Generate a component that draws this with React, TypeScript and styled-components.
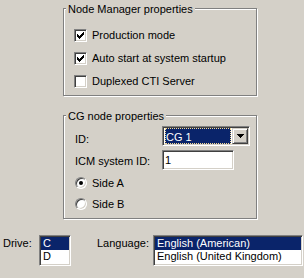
import React from "react";
import styled, { createGlobalStyle } from "styled-components";

const Global = createGlobalStyle`
  html, body { margin: 0; padding: 0; background: #d4d0c8; }
  body { font-family: "Liberation Sans", Arial, sans-serif; font-size: 11px; color: #000; }
`;

const Page = styled.div`
  width: 304px;
  height: 278px;
  box-sizing: border-box;
  padding-top: 8px;
  display: flex;
  flex-direction: column;
  background: #d4d0c8;
  overflow: hidden;
  font-family: "Liberation Sans", Arial, sans-serif;
  font-size: 11px;
  line-height: 13px;
  color: #000;
`;

const GroupColumn = styled.div`
  margin-left: 63px;
  display: flex;
  flex-direction: column;
`;

const Group = styled.div<{ $h: number; $pt: number; $pl: number; $mt?: number }>`
  position: relative;
  box-sizing: border-box;
  width: 194px;
  height: ${(p) => p.$h}px;
  margin-top: ${(p) => p.$mt ?? 0}px;
  padding: ${(p) => p.$pt}px 0 0 ${(p) => p.$pl}px;
  border: 1px solid #808080;
  box-shadow: inset 1px 1px 0 #fff, 1px 1px 0 #fff;
`;

const Legend = styled.span`
  position: absolute;
  top: -6px;
  left: 2px;
  padding: 0 2px;
  background: #d4d0c8;
  line-height: 13px;
  white-space: nowrap;
`;

const CheckList = styled.div`
  display: flex;
  flex-direction: column;
  gap: 10px;
`;

const CheckRow = styled.div`
  display: flex;
  align-items: center;
  gap: 5px;
  height: 13px;
  white-space: nowrap;
`;

const sunken = `
  border: 1px solid;
  border-color: #808080 #fff #fff #808080;
  box-shadow: inset 1px 1px 0 #404040, inset -1px -1px 0 #d4d0c8;
`;

const raised = `
  border: 1px solid;
  border-color: #d4d0c8 #404040 #404040 #d4d0c8;
  box-shadow: inset 1px 1px 0 #fff, inset -1px -1px 0 #808080;
`;

const CheckBox = styled.span`
  box-sizing: border-box;
  width: 13px;
  height: 13px;
  flex: none;
  background: #fff;
  ${sunken}
  display: flex;
  align-items: center;
  justify-content: center;
`;

const FormGrid = styled.div`
  display: grid;
  grid-template-columns: 87px auto;
  row-gap: 4px;
  align-items: start;
`;

const FieldLabel = styled.span<{ $pt: number }>`
  padding-top: ${(p) => p.$pt}px;
  white-space: nowrap;
`;

const Combo = styled.div`
  box-sizing: border-box;
  width: 88px;
  height: 20px;
  background: #fff;
  ${sunken}
  padding: 1px;
  display: flex;
`;

const ComboField = styled.div`
  flex: 1;
  padding: 0 1px;
  display: flex;
`;

const ComboSelection = styled.div`
  flex: 1;
  box-sizing: border-box;
  background: #0a246a;
  color: #fff;
  border: 1px dotted #f5db95;
  line-height: 14px;
  padding-top: 1px;
  white-space: nowrap;
`;

const DropButton = styled.div`
  box-sizing: border-box;
  width: 16px;
  height: 16px;
  background: #d4d0c8;
  ${raised}
  display: flex;
  align-items: center;
  justify-content: center;
`;

const TextField = styled.div`
  box-sizing: border-box;
  width: 72px;
  height: 20px;
  background: #fff;
  ${sunken}
  padding: 1px 2px;
  line-height: 16px;
`;

const RadioList = styled.div`
  grid-column: 1 / -1;
  margin-top: 3px;
  display: flex;
  flex-direction: column;
  gap: 9px;
`;

const RadioRow = styled.div`
  display: flex;
  align-items: center;
  gap: 5px;
  height: 12px;
  white-space: nowrap;
`;

const Radio = styled.span`
  box-sizing: border-box;
  width: 12px;
  height: 12px;
  flex: none;
  border-radius: 50%;
  background: #fff;
  ${sunken}
  display: flex;
  align-items: center;
  justify-content: center;
`;

const RadioDot = styled.span`
  width: 4px;
  height: 4px;
  border-radius: 50%;
  background: #000;
`;

const BottomRow = styled.div`
  display: flex;
  align-items: flex-start;
  margin-top: 16px;
  padding-left: 3px;
`;

const BottomLabel = styled.span<{ $w: number; $ml?: number }>`
  width: ${(p) => p.$w}px;
  margin-left: ${(p) => p.$ml ?? 0}px;
  padding-top: 2px;
  white-space: nowrap;
`;

const ListBox = styled.div<{ $w: number }>`
  box-sizing: border-box;
  width: ${(p) => p.$w}px;
  height: 31px;
  background: #fff;
  ${sunken}
  padding: 1px;
  display: flex;
  flex-direction: column;
`;

const ListItem = styled.div<{ $selected?: boolean }>`
  height: 13px;
  line-height: 13px;
  padding-left: 2px;
  white-space: nowrap;
  background: ${(p) => (p.$selected ? "#0a246a" : "transparent")};
  color: ${(p) => (p.$selected ? "#fff" : "#000")};
`;

const CheckMark = () => (
  <svg width="7" height="7" viewBox="0 0 7 7" shapeRendering="crispEdges">
    <path
      d="M0 2h1v1h1v1h1v-1h1v-1h1v-1h1v-1h1v3h-1v1h-1v1h-1v1h-1v1h-1v-1h-1v-1h-1z"
      fill="#000"
    />
  </svg>
);

const DownArrow = () => (
  <svg width="7" height="4" viewBox="0 0 7 4" shapeRendering="crispEdges">
    <path d="M0 0h7v1h-1v1h-1v1h-1v1h-1v-1h-1v-1h-1v-1h-1z" fill="#000" />
  </svg>
);

const checks = [
  { label: "Production mode", checked: true },
  { label: "Auto start at system startup", checked: true },
  { label: "Duplexed CTI Server", checked: false },
];

export default function App() {
  return (
    <>
      <Global />
      <Page>
        <GroupColumn>
          <Group $h={88} $pt={20} $pl={10}>
            <Legend>Node Manager properties</Legend>
            <CheckList>
              {checks.map((c) => (
                <CheckRow key={c.label}>
                  <CheckBox>{c.checked && <CheckMark />}</CheckBox>
                  {c.label}
                </CheckRow>
              ))}
            </CheckList>
          </Group>
          <Group $h={104} $pt={10} $pl={11} $mt={19}>
            <Legend>CG node properties</Legend>
            <FormGrid>
              <FieldLabel $pt={7}>ID:</FieldLabel>
              <Combo>
                <ComboField>
                  <ComboSelection>CG 1</ComboSelection>
                </ComboField>
                <DropButton>
                  <DownArrow />
                </DropButton>
              </Combo>
              <FieldLabel $pt={5}>ICM system ID:</FieldLabel>
              <TextField>1</TextField>
              <RadioList>
                <RadioRow>
                  <Radio>
                    <RadioDot />
                  </Radio>
                  Side A
                </RadioRow>
                <RadioRow>
                  <Radio />
                  Side B
                </RadioRow>
              </RadioList>
            </FormGrid>
          </Group>
        </GroupColumn>
        <BottomRow>
          <BottomLabel $w={36}>Drive:</BottomLabel>
          <ListBox $w={32}>
            <ListItem $selected>C</ListItem>
            <ListItem>D</ListItem>
          </ListBox>
          <BottomLabel $w={56} $ml={26}>
            Language:
          </BottomLabel>
          <ListBox $w={150}>
            <ListItem $selected>English (American)</ListItem>
            <ListItem>English (United Kingdom)</ListItem>
          </ListBox>
        </BottomRow>
      </Page>
    </>
  );
}
